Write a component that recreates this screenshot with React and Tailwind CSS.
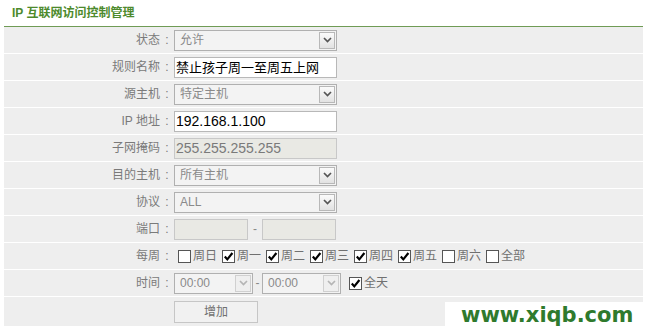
import React from "react";

const CJK = { fontFamily: '"Liberation Sans", "Noto Sans CJK SC", sans-serif' };

function Chevron({ dim }) {
  return (
    <svg width="9" height="6" viewBox="0 0 9 6" className="block">
      <path d="M1 1 L4.5 4.5 L8 1" fill="none" stroke={dim ? "#b5b5b5" : "#555"} strokeWidth="1.7" />
    </svg>
  );
}

function Select({ value, wide = true, dim = false }) {
  return (
    <div
      className={
        (wide ? "w-[163px] " : "w-[79px] ") +
        "h-[21px] flex items-center border border-[#b0b0b0] bg-[#f3f3f3]"
      }
    >
      <span className="flex-1 pl-[5px] text-[12px] text-[#8a8a8a] leading-none">{value}</span>
      <div
        className={
          "w-[16px] h-[17px] mr-px flex items-center justify-center border " +
          (dim
            ? "border-[#d0d0d0] bg-[#efefef]"
            : "border-[#b8b8b8] bg-gradient-to-b from-[#fbfbfb] to-[#e2e2e2]")
        }
      >
        <Chevron dim={dim} />
      </div>
    </div>
  );
}

function Input({ value, disabled = false, w = "w-[163px]", small = false }) {
  return (
    <div
      className={
        w +
        " h-[21px] flex items-center border " +
        (disabled ? "border-[#c8c8c8] bg-[#e9e9e4] text-[#7a7a7a]" : "border-[#b8b8b8] bg-white text-black")
      }
    >
      <span className={(small ? "text-[13px]" : "text-[14px]") + " pl-[1px] leading-none whitespace-nowrap"}>
        {value}
      </span>
    </div>
  );
}

function Check({ checked, label }) {
  return (
    <div className="flex items-center mr-[5px]">
      <div className="w-[13px] h-[13px] border border-[#555] bg-white flex items-center justify-center">
        {checked && (
          <svg width="11" height="11" viewBox="0 0 11 11" className="block">
            <path d="M1.8 5.6 L4.3 8.4 L9.4 2" fill="none" stroke="#000" strokeWidth="2.2" />
          </svg>
        )}
      </div>
      <span className="ml-[2px] text-[12px] text-[#707070] leading-none">{label}</span>
    </div>
  );
}

function Row({ label, children }) {
  return (
    <div className="h-[26px] flex bg-[#eeeeee]">
      <div className="w-[170px] flex items-center justify-end">
        <span className="text-[12px] text-[#7a7a7a] leading-none">{label}</span>
        <span className="w-[14px] text-center text-[12px] text-[#7a7a7a] leading-none">:</span>
      </div>
      <div className="flex-1 flex items-center">{children}</div>
    </div>
  );
}

export default function App() {
  return (
    <div className="relative w-[647px] h-[328px] bg-white overflow-hidden" style={CJK}>
      <div className="h-[26px] pl-[12px] flex items-center">
        <span className="text-[12px] font-bold text-[#4d8a2c] leading-none">IP 互联网访问控制管理</span>
      </div>
      <div className="mx-[4px] border-t border-[#6f9b55] flex flex-col gap-px bg-white">
        <Row label="状态">
          <Select value="允许" />
        </Row>
        <Row label="规则名称">
          <Input value="禁止孩子周一至周五上网" small />
        </Row>
        <Row label="源主机">
          <Select value="特定主机" />
        </Row>
        <Row label="IP 地址">
          <Input value="192.168.1.100" />
        </Row>
        <Row label="子网掩码">
          <Input value="255.255.255.255" disabled />
        </Row>
        <Row label="目的主机">
          <Select value="所有主机" />
        </Row>
        <Row label="协议">
          <Select value="ALL" />
        </Row>
        <Row label="端口">
          <Input value="" disabled w="w-[74px]" />
          <span className="w-[14px] text-center text-[12px] text-[#888] leading-none">-</span>
          <Input value="" disabled w="w-[74px]" />
        </Row>
        <Row label="每周">
          <div className="flex items-center pl-[4px]">
            <Check label="周日" />
            <Check checked label="周一" />
            <Check checked label="周二" />
            <Check checked label="周三" />
            <Check checked label="周四" />
            <Check checked label="周五" />
            <Check label="周六" />
            <Check label="全部" />
          </div>
        </Row>
        <Row label="时间">
          <Select value="00:00" wide={false} dim />
          <span className="w-[9px] text-center text-[12px] text-[#888] leading-none">-</span>
          <Select value="00:00" wide={false} dim />
          <div className="ml-[8px] flex items-center">
            <Check checked label="全天" />
          </div>
        </Row>
        <div className="h-[29px] flex bg-[#eeeeee]">
          <div className="w-[170px]" />
          <div className="flex-1 flex items-center">
            <div className="w-[84px] h-[22px] border border-[#c6c6c6] bg-[#f1f1f1] flex items-center justify-center">
              <span className="text-[12px] text-[#707070] leading-none">增加</span>
            </div>
          </div>
        </div>
      </div>
      <div className="absolute left-[445px] top-[302px] w-[202px] h-[26px] bg-white flex items-center pl-[16px]">
        <span
          className="text-[21px] font-bold text-[#2f7a2d] leading-none"
          style={{ fontFamily: '"DejaVu Sans", sans-serif' }}
        >
          www.xiqb.com
        </span>
      </div>
    </div>
  );
}
